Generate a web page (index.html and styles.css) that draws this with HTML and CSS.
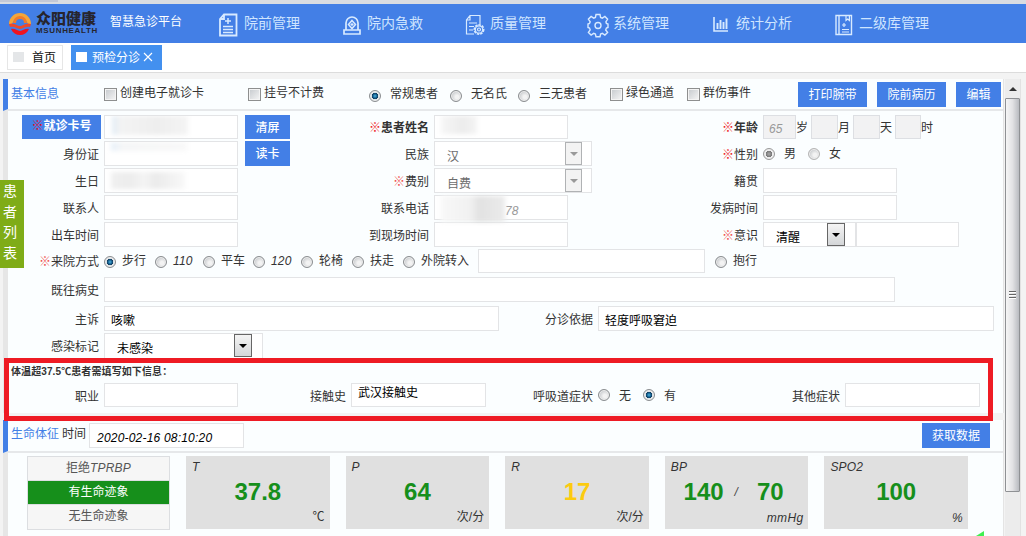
FILE: index.html
```html
<!DOCTYPE html>
<html lang="zh-CN">
<head>
    <meta charset="UTF-8">
    <title>智慧急诊平台</title>
    <link rel="stylesheet" href="styles.css">
</head>
<body>

    <div class="topstrip"><div class="topstrip-tab"></div></div>

    <header class="header">
        <svg class="logo" width="24" height="26" viewBox="0 0 24 26">
            <path d="M1 14a11 11 0 0 1 22 0h-3a8.500 8.500 0 0 0-16 0z" fill="#f4a63a"/>
            <path d="M5 13a7 7 0 0 1 14 0h-3a4 4 0 0 0-8 0z" fill="#f07b2c"/>
            <path d="M1 14c5-2 8 2 11 2s6-4 11-2l-1 3c-4-1-7 2-10 2s-6-3-10-2z" fill="#ee4a2a"/>
            <path d="M3 19c4-1 6 2 9 2s5-3 9-2c-2 4-5 6-9 6s-7-2-9-6z" fill="#f0141e"/>
        </svg>
        <div class="brand">
            <div class="brand-cn">众阳健康</div>
            <div class="brand-en">MSUNHEALTH</div>
        </div>
        <div class="platform">智慧急诊平台</div>
        <nav class="nav">
            <div class="nav-item">
                <svg viewBox="0 0 26 26"><path d="M9 2.500h12.500v21H5V7z M9 2.500V7H5" stroke-width="1.800"/><path d="M13 6v6M10 9h6M8 14.500h10M8 17.500h10M8 20.500h10" stroke-width="1.500"/></svg>
                <span>院前管理</span>
            </div>
            <div class="nav-item">
                <svg viewBox="0 0 26 26"><path d="M8 18V11a6 6 0 0 1 12 0v7M6 18h16v4H6z" stroke-width="1.700"/><path d="M14 8.500l3.500 4-3.500 4-3.500-4z" stroke-width="1.500"/><path d="M14 11v3M12.500 12.500h3"/></svg>
                <span>院内急救</span>
            </div>
            <div class="nav-item">
                <svg viewBox="0 0 26 26"><path d="M19 12V3.500H9L5.500 8v14H13M9 3.500V8H5.500M8 11h8M8 14.500h5M8 18h4"/><circle cx="18" cy="17.500" r="4.700" stroke-width="1.600" stroke-dasharray="2.500 1"/><circle cx="18" cy="17.500" r="3.700"/><circle cx="18" cy="17.500" r="1.500"/></svg>
                <span>质量管理</span>
            </div>
            <div class="nav-item">
                <svg viewBox="0 0 26 26"><path d="M12 2.500h4l.6 3 1.700.7 2.600-1.700 2.700 2.700-1.700 2.600.5 1.700 1.600.5v3.500l-1.600.5-.7 2 1.900 2.400-2.700 2.700-2.600-1.700-1.700.7-.6 2.600h-4l-.6-2.600-1.700-.7-2.600 1.700-2.700-2.700 1.800-2.600-.7-1.800-1.500-.5V12l1.500-.5.7-1.700-1.800-2.600 2.700-2.700 2.600 1.700 1.700-.7z" stroke-width="1.400"/><circle cx="14" cy="13.500" r="3" stroke-width="1.400"/></svg>
                <span>系统管理</span>
            </div>
            <div class="nav-item">
                <svg viewBox="0 0 26 26"><path d="M7 5v14h14" stroke-width="1.600"/><path d="M10.500 11v6M13.500 8v9M16.500 10v7M19.500 6.500V17" stroke-width="1.900"/></svg>
                <span>统计分析</span>
            </div>
            <div class="nav-item">
                <svg viewBox="0 0 26 26"><path d="M6 3.500h15.500v19H6zM9 3.500v19" stroke-width="1.400"/><path d="M16 3.500v5l1.700-1.500 1.700 1.500v-5M14 11v4M12 13h4M12 17.500h7M12 20h7"/></svg>
                <span>二级库管理</span>
            </div>
        </nav>
    </header>

    <div class="tabs">
        <div class="tab"><i></i>首页</div>
        <div class="tab active"><i></i>预检分诊<svg width="10" height="10" viewBox="0 0 10 10"><path d="M1 1l8 8M9 1L1 9"/></svg></div>
    </div>

    <div class="main">
        <div class="content">
            <section class="panel">
                <div class="panel-head head-grid">
                    <span class="title">基本信息</span>
                    <span class="opt"><i class="check"></i>创建电子就诊卡</span>
                    <span class="opt"><i class="check"></i>挂号不计费</span>
                    <span class="opt wide"><i class="radio on"></i>常规患者</span>
                    <span class="opt wide"><i class="radio"></i>无名氏</span>
                    <span class="opt wide"><i class="radio"></i>三无患者</span>
                    <span class="opt"><i class="check"></i>绿色通道</span>
                    <span class="opt"><i class="check"></i>群伤事件</span>
                    <div class="head-btns">
                        <button class="btn">打印腕带</button>
                        <button class="btn">院前病历</button>
                        <button class="btn">编辑</button>
                    </div>
                </div>

                <div class="form">
                    <div class="row r3 first">
                        <div class="card-label"><em>※</em>就诊卡号</div>
                        <div class="cell"><div class="input w134"><span class="smear smear-card"></span></div><button class="btn bold">清屏</button></div>
                        <label class="bold"><em>※</em>患者姓名</label>
                        <div class="cell"><div class="input w134"><span class="smear smear-name"></span></div></div>
                        <label class="bold"><em>※</em>年龄</label>
                        <div class="cell age">
                            <div class="input off w33"><span class="latin">65</span></div>岁
                            <div class="input off w27"></div>月
                            <div class="input off w27"></div>天
                            <div class="input off w26"></div>时
                        </div>
                    </div>
                    <div class="row r3">
                        <label>身份证</label>
                        <div class="cell"><div class="input w134"><span class="smear smear-id"></span></div><button class="btn bold">读卡</button></div>
                        <label>民族</label>
                        <div class="cell"><div class="select w158 dim"><span>汉</span><b></b></div></div>
                        <label><em class="strong">※</em>性别</label>
                        <div class="cell sex">
                            <span class="opt wide"><i class="radio gray on"></i>男</span>
                            <span class="opt wide"><i class="radio gray"></i>女</span>
                        </div>
                    </div>
                    <div class="row r3">
                        <label>生日</label>
                        <div class="cell"><div class="input w134"><span class="smear smear-birth"></span></div></div>
                        <label><em>※</em>费别</label>
                        <div class="cell"><div class="select w158 dim"><span>自费</span><b></b></div></div>
                        <label>籍贯</label>
                        <div class="cell"><div class="input w134"></div></div>
                    </div>
                    <div class="row r3">
                        <label>联系人</label>
                        <div class="cell"><div class="input w134"></div></div>
                        <label>联系电话</label>
                        <div class="cell"><div class="input w134 phone"><span class="smear smear-phone"></span><span class="latin">78</span></div></div>
                        <label>发病时间</label>
                        <div class="cell"><div class="input w134"></div></div>
                    </div>
                    <div class="row r3">
                        <label>出车时间</label>
                        <div class="cell"><div class="input w134"></div></div>
                        <label>到现场时间</label>
                        <div class="cell"><div class="input w134"></div></div>
                        <label><em>※</em>意识</label>
                        <div class="cell"><div class="select w93"><span>清醒</span><b></b></div><div class="input w103"></div></div>
                    </div>
                    <div class="row arrive">
                        <label><em>※</em>来院方式</label>
                        <span class="opt mid"><i class="radio on"></i>步行</span>
                        <span class="opt mid"><i class="radio"></i><span class="latin">110</span></span>
                        <span class="opt mid"><i class="radio"></i>平车</span>
                        <span class="opt mid"><i class="radio"></i><span class="latin">120</span></span>
                        <span class="opt mid"><i class="radio"></i>轮椅</span>
                        <span class="opt mid"><i class="radio"></i>扶走</span>
                        <span class="opt mid"><i class="radio"></i>外院转入</span>
                        <div class="input w227"></div>
                        <span class="opt mid"><i class="radio"></i>抱行</span>
                    </div>
                    <div class="row history">
                        <label>既往病史</label>
                        <div class="input"></div>
                    </div>
                    <div class="row complaint">
                        <label>主诉</label>
                        <div class="input">咳嗽</div>
                        <label>分诊依据</label>
                        <div class="input">轻度呼吸窘迫</div>
                    </div>
                    <div class="row infect">
                        <label>感染标记</label>
                        <div class="select w159"><span>未感染</span><b></b></div>
                    </div>
                    <div class="notice">体温超37.5℃患者需填写如下信息：</div>
                    <div class="row fever">
                        <label>职业</label>
                        <div class="input"></div>
                        <label>接触史</label>
                        <div class="input contact">武汉接触史</div>
                        <label>呼吸道症状</label>
                        <div class="cell sex">
                            <span class="opt wide"><i class="radio"></i>无</span>
                            <span class="opt wide"><i class="radio on"></i>有</span>
                        </div>
                        <label>其他症状</label>
                        <div class="input"></div>
                    </div>
                </div>
            </section>

            <section class="panel vital">
                <div class="panel-head vital-head">
                    <span class="title">生命体征</span>
                    <span class="time-label">时间</span>
                    <div class="input time"><span class="latin">2020-02-16 08:10:20</span></div>
                    <button class="btn">获取数据</button>
                </div>
                <div class="vital-body">
                    <div class="signs">
                        <div class="sign">拒绝<span class="latin">TPRBP</span></div>
                        <div class="sign active">有生命迹象</div>
                        <div class="sign">无生命迹象</div>
                    </div>
                    <div class="card"><span class="name">T</span><span class="value">37.8</span><span class="unit cn">℃</span></div>
                    <div class="card"><span class="name">P</span><span class="value">64</span><span class="unit cn">次/分</span></div>
                    <div class="card"><span class="name">R</span><span class="value warn">17</span><span class="unit cn">次/分</span></div>
                    <div class="card"><span class="name">BP</span><span class="value pair"><span>140</span><i>/</i><span>70</span></span><span class="unit">mmHg</span></div>
                    <div class="card"><span class="name">SPO2</span><span class="value">100</span><span class="unit">%</span></div>
                </div>
            </section>
        </div>

        <div class="scrollbar">
            <div class="arrow-up"></div>
            <div class="thumb"><i></i><i></i><i></i></div>
        </div>
    </div>

    <div class="side-tab">患者列表</div>
    <div class="highlight"></div>
    <div class="corner"></div>

</body>
</html>
```
FILE: styles.css
```css
* { box-sizing: border-box; }
body { margin: 0; width: 1026px; height: 536px; overflow: hidden; position: relative; display: flex; flex-direction: column; background: #f3f3f3; color: #333; font: 12px "Liberation Sans", "Noto Sans CJK SC", sans-serif; }
em, i { font-style: normal; }
label { text-align: right; padding-right: 5px; white-space: nowrap; line-height: 28px; }
em { color: #f0524f; }
.bold { font-weight: bold; }
.bold em, em.strong { color: #ee1c25; }
.latin { font-style: italic; letter-spacing: 0.2px; }

/* header */
.topstrip { height: 4px; flex: none; background: #d9dce2; }
.topstrip-tab { width: 58px; height: 2px; background: #c3c8d6; }
.header { height: 39px; flex: none; display: flex; background: #437fe6; color: #fff; }
.logo { margin: 6px 0 0 8px; }
.brand { width: 78px; padding: 7px 0 0 4px; color: #26252e; white-space: nowrap; }
.brand-cn { font-size: 15px; line-height: 16px; font-weight: 900; }
.brand-en { font-size: 8px; line-height: 8px; font-weight: bold; letter-spacing: 0.65px; }
.platform { width: 105px; line-height: 37px; }
.nav { display: flex; }
.nav-item { width: 123px; display: flex; align-items: center; font-size: 14px; color: #cfe5ff; white-space: nowrap; }
.nav-item span { padding-bottom: 3px; }
.nav-item svg { width: 26px; height: 26px; margin: 2px 3px 0 0; flex: none; fill: none; stroke: #d8eaff; stroke-width: 1.2; }

/* tabs */
.tabs { height: 30px; flex: none; display: flex; gap: 8px; padding: 2px 7px; background: #fff; border-bottom: 1px solid #dcdcdc; }
.tab { height: 25px; display: flex; align-items: center; border: 1px solid #e6e6e6; padding: 0 5px 2px; width: 56px; color: #111; white-space: nowrap; }
.tab i { width: 11px; height: 10px; margin-right: 8px; background: #e4e6e8; }
.tab.active { width: 91px; padding-left: 4px; background: #4390ef; border-color: #4390ef; color: #fff; }
.tab.active i { background: #fff; margin-right: 5px; }
.tab svg { margin-left: 3px; fill: none; stroke: #fff; stroke-width: 1.1; }

.main { flex: 1; min-height: 0; display: flex; padding: 6px 5px 0 3px; }
.content { width: 1001px; margin-right: 1px; }
.panel { background: #fbfeff; border-left: 5px solid #e6e6e6; border-right: 1px solid #e4e4e4; height: 334px; }
.panel-head { height: 32px; margin-left: -5px; border-left: 5px solid #437fe6; border-bottom: 2px solid #e6e8ea; padding-left: 3px; }
.title { color: #437fe6; }
.btn { height: 25px; border: 0; padding: 0 0 2px; background: #437fe6; color: #fff; font: inherit; font-size: 12px; white-space: nowrap; }
.btn.bold { width: 45px; margin-left: 7px; font-weight: 500; }

.head-grid { display: grid; grid-template-columns: 93px 144px 121px 81px 68px 92px 77px 111px 1fr; align-items: center; }
.head-grid .title { padding-bottom: 3px; }
.head-btns { display: grid; grid-template-columns: 69px 69px 45px; gap: 10px; }
.opt { display: flex; align-items: center; gap: 3px; white-space: nowrap; line-height: 16px; }
.head-grid .opt:not(.wide) { padding-bottom: 2px; }
.head-grid .check { margin-top: 2px; }
.head-grid .radio { margin-top: 3px; }
.opt.mid { gap: 6px; padding-bottom: 2px; }
.opt.mid .radio { margin-top: 2px; }
.opt.wide { gap: 9px; }
.check { width: 13px; height: 13px; border: 1px solid #8e8f8f; background: linear-gradient(135deg, #c5c9cd, #f6f6f6); box-shadow: inset 0 0 0 1px #f4f4f4; flex: none; }
.radio { width: 12px; height: 12px; border-radius: 50%; border: 1px solid #8a8d90; background: radial-gradient(circle at 60% 60%, #f3f3f3 20%, #c4c7ca 75%); box-shadow: inset 0 0 0 1px #eee; flex: none; }
.radio.on { background: radial-gradient(circle, #4db4df 0, #0f5484 32%, #12354f 45%, #dde2e5 50%); }
.radio.gray { border-color: #b5b5b5; }
.radio.gray.on { background: radial-gradient(circle, #aaa 0, #777 42%, #eee 50%); border-color: #999; }

/* form */
.form { padding-top: 3px; }
.row { display: grid; height: 27px; align-items: start; }
.r3 { grid-template-columns: 96px 234px 96px 233px 96px 1fr; }
.first { padding-top: 1px; }
.first .input, .first .btn { height: 24px; }
.cell { display: flex; align-items: flex-start; white-space: nowrap; }
.input { height: 25px; border: 1px solid #e3e4e6; background: #fff; padding: 0 6px; line-height: 28px; color: #000; white-space: nowrap; overflow: hidden; }
.input.off { height: 24px; background: #f2f2f3; border-color: #dddfe3; color: #999; padding: 0 5px; line-height: 26px; }
.w134 { width: 134px; }
.w103 { width: 103px; }
.w227 { width: 227px; height: 24px; }
.w33 { width: 33px; }
.w27 { width: 27px; }
.w26 { width: 26px; }
.first label, .age { line-height: 26px; }
.age .input { margin-left: 3px; }
.age .input:first-child { margin-left: 0; }
.card-label { width: 79px; height: 24px; margin-left: 14px; background: #437fe6; color: #fff; font-weight: bold; text-align: center; line-height: 22px; }
.card-label em { color: #e3122b; }
.sex { gap: 12px; height: 26px; align-items: center; }
.sex .radio { margin-top: -1px; }
.fever .sex { height: 25px; }

.select { display: flex; justify-content: space-between; height: 25px; border: 1px solid #e3e4e6; background: #fff; padding-left: 12px; line-height: 31px; color: #000; }
.select b { width: 18px; height: 23px; margin-right: 10px; border: 1px solid #666; background: linear-gradient(#f4f4f4, #d4d6d8); display: flex; align-items: center; justify-content: center; }
.select b::after { content: ""; border: 4px solid transparent; border-top-color: #000; border-bottom: 0; }
.select.dim { color: #6d6d6d; }
.select.dim b { border-color: #b0b2b4; background: #f3f3f3; width: 17px; margin-right: 9px; }
.select.dim b::after { border-top-color: #999; }
.w158 { width: 158px; }
.w159 { width: 159px; }
.w93 { width: 93px; }

/* hidden patient data */
.smear { display: block; filter: blur(2px); }
.smear-card { width: 76px; height: 19px; margin-left: 1px; background: linear-gradient(90deg, #e3edf6, #f3f3f3 12%, #eeeeee 60%, #f4f4f4); }
.smear-id { width: 76px; height: 9px; background: linear-gradient(90deg, #e7f0f9, #f5f6f7 15%, #f8f8f8); }
.smear-birth { width: 74px; height: 17px; margin-top: 3px; background: linear-gradient(90deg, #f0f0f0, #ececec 25%, #f4f4f4 45%, #ebebeb 60%, #f8f8f8); }
.smear-name { width: 36px; height: 18px; background: linear-gradient(90deg, #f6f6f6, #ececec 60%, #f4f4f4); }
.phone { display: flex; overflow: visible; color: #999; line-height: 30px; }
.smear-phone { width: 64px; height: 26px; flex: none; background: linear-gradient(90deg, #f8f8f8, #f1f1f1 45%, #e2e2e2 60%, #ebebeb); }

.arrive { grid-template-columns: 96px 51px 48px 50px 48px 51px 51px 75px 237px auto; height: 28px; }
.arrive .opt { height: 26px; }
.arrive label { line-height: 27px; }
.history { grid-template-columns: 96px 791px; height: 29px; }
.complaint { grid-template-columns: 96px 395px 99px 396px; }
.infect { grid-template-columns: 96px 159px; }
.infect .select { height: 26px; }
.notice { height: 23px; padding-left: 3px; line-height: 24px; font-size: 10px; font-weight: bold; letter-spacing: 0.1px; }
.fever { grid-template-columns: 96px 134px 113px 135px 112px 162px 85px 135px; }
.fever label { line-height: 29px; }
.fever .input { height: 24px; }
.fever .contact { line-height: 19px; }

/* vital signs */
.vital { margin-top: 7px; height: 130px; }
.vital-head { height: 33px; display: flex; }
.vital-head .title, .time-label { line-height: 29px; margin-right: 3px; }
.time { width: 155px; margin-top: 3px; padding-left: 7px; line-height: 28px; }
.vital-head .btn { width: 68px; margin: 3px 13px 0 auto; }
.vital-body { display: grid; grid-template-columns: 143px repeat(5, 143.6px); column-gap: 16px; padding: 3px 0 0 19px; }
.signs { height: 74px; display: grid; grid-template-rows: repeat(3, 1fr); border: 1px solid #dcdee1; }
.sign { background: #f6f6f6; text-align: center; line-height: 23px; color: #555; border-bottom: 1px solid #dcdee1; }
.sign:last-child { border-bottom: 0; }
.sign.active { background: #168f1b; color: #fff; }
.card { height: 73px; background: #e0e0e0; padding: 4px 5px; display: flex; flex-direction: column; color: #333; }
.name { line-height: 15px; font-style: italic; padding-left: 1px; letter-spacing: 0.2px; }
.value { height: 32px; line-height: 33px; text-align: center; font-size: 24px; font-weight: bold; color: #168f1b; }
.warn { color: #fccb10; }
.pair { display: flex; justify-content: center; padding-right: 6px; gap: 11px; }
.pair i { font: italic 12px/34px "Liberation Sans", sans-serif; color: #444; }
.pair span:last-child { margin-left: 8px; }
.unit { text-align: right; line-height: 22px; font-style: italic; letter-spacing: 0.3px; }
.unit.cn { line-height: 20px; font-style: normal; letter-spacing: 0; }

/* scrollbar */
.scrollbar { width: 16px; height: 457px; background: #ececec; border-right: 1px solid #e2e2e2; }
.arrow-up { height: 19px; padding: 8px 0 0 4px; }
.arrow-up::after { content: ""; display: block; width: 0; border: 4px solid transparent; border-bottom-color: #333; border-top: 0; }
.thumb { width: 15px; height: 394px; border: 1px solid #8f9194; border-radius: 1px; background: linear-gradient(90deg, #f6f6f6, #e2e2e4 50%, #b9bbc0); display: flex; flex-direction: column; align-items: center; justify-content: center; gap: 1px; }
.thumb i { width: 7px; height: 2px; background: #666; border-bottom: 1px solid #fff; }

/* overlays */
.side-tab { position: absolute; left: 0; top: 180px; width: 24px; height: 88px; padding: 1px 7px 0 3px; background: #7fac17; color: #fff; font-size: 14px; line-height: 20.5px; word-break: break-all; }
.highlight { position: absolute; left: 4px; top: 358px; width: 989px; height: 63px; border: 5px solid #ee1b24; }
.corner { position: absolute; left: 976px; top: 531px; border-left: 8px solid transparent; border-bottom: 5px solid #3ff050; }
```
